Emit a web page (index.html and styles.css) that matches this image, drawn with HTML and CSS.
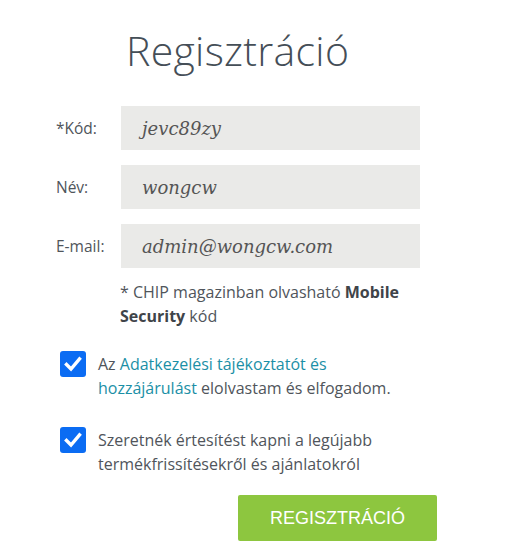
FILE: index.html
```html
<!DOCTYPE html>
<html lang="hu">
<head>
<meta charset="utf-8">
<title>Regisztráció</title>
<link rel="stylesheet" href="styles.css">
</head>
<body>
<div class="page">
  <h1 class="title">Regisztráció</h1>
  <form class="form">
    <div class="fields">
      <div class="row">
        <label class="label">*Kód:</label>
        <div class="field">jevc89zy</div>
      </div>
      <div class="row">
        <label class="label">Név:</label>
        <div class="field">wongcw</div>
      </div>
      <div class="row">
        <label class="label">E-mail:</label>
        <div class="field">admin@wongcw.com</div>
      </div>
    </div>
    <p class="note">* CHIP magazinban olvasható <b>Mobile Security</b> kód</p>
    <div class="check check-first">
      <span class="box"><svg viewBox="0 0 26 26" width="26" height="26"><path d="M6.5 13.5 L11 18 L19.5 8" fill="none" stroke="#fff" stroke-width="3.4" stroke-linecap="square" stroke-linejoin="miter"/></svg></span>
      <span class="check-text">Az <a class="link">Adatkezelési tájékoztatót és hozzájárulást</a> elolvastam és elfogadom.</span>
    </div>
    <div class="check check-second">
      <span class="box"><svg viewBox="0 0 26 26" width="26" height="26"><path d="M6.5 13.5 L11 18 L19.5 8" fill="none" stroke="#fff" stroke-width="3.4" stroke-linecap="square" stroke-linejoin="miter"/></svg></span>
      <span class="check-text">Szeretnék értesítést kapni a legújabb termékfrissítésekről és ajánlatokról</span>
    </div>
    <div class="actions">
      <button type="button" class="btn">REGISZTRÁCIÓ</button>
    </div>
  </form>
</div>
</body>
</html>
```
FILE: styles.css
```css
html, body {
  margin: 0;
  padding: 0;
  background: #fff;
}
body {
  font-family: "Open Sans", "Noto Sans", sans-serif;
  color: #50555b;
}
.page {
  padding: 20px 0 0 56px;
}
.title {
  margin: 0 0 26px 70px;
  font-weight: 300;
  font-size: 41px;
  line-height: 60px;
  color: #454e57;
  letter-spacing: 0.3px;
}
.form {
  display: flex;
  flex-direction: column;
}
.fields {
  display: flex;
  flex-direction: column;
  gap: 15px;
}
.row {
  display: grid;
  grid-template-columns: 65px 299px;
  align-items: center;
}
.label {
  font-size: 15.5px;
  color: #50555b;
}
.field {
  height: 44px;
  background: #eaeae8;
  padding-left: 21px;
  display: flex;
  align-items: center;
  font-family: "DejaVu Serif", Georgia, serif;
  font-style: italic;
  font-size: 18px;
  color: #555;
}
.note {
  margin: 12px 0 0 64px;
  width: 300px;
  font-size: 16px;
  line-height: 24px;
  color: #50555b;
}
.note b {
  font-weight: 700;
  color: #3f4449;
}
.check {
  display: flex;
  align-items: flex-start;
  gap: 12px;
  margin-left: 4px;
}
.check-first {
  margin-top: 24px;
}
.check-second {
  margin-top: 28px;
}
.box {
  flex: none;
  width: 26px;
  height: 26px;
  border-radius: 3px;
  background: #0b6cf3;
  display: block;
  margin-top: -1px;
}
.box svg {
  display: block;
}
.check-text {
  font-size: 16px;
  line-height: 24px;
  color: #50555b;
  width: 320px;
}
.link {
  color: #1b8fa6;
  text-decoration: none;
}
.actions {
  display: flex;
  padding-left: 182px;
  margin-top: 19px;
}
.btn {
  width: 199px;
  height: 46px;
  border: none;
  border-radius: 2px;
  background: #8dc63f;
  color: #fff;
  font-family: "Liberation Sans", Arial, sans-serif;
  font-size: 18px;
  padding: 0;
}
```
